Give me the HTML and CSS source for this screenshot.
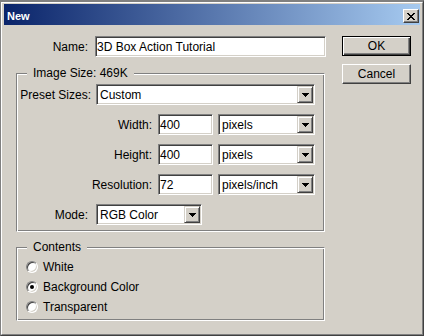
FILE: index.html
```html
<!DOCTYPE html>
<html lang="en">

<head>
    <meta charset="UTF-8">
    <title>New</title>
    <link rel="stylesheet" href="styles.css">
</head>

<body>
    <!-- 对话框外框 -->
    <div class="window">
        <div class="frame">
            <!-- 标题栏 -->
            <div class="titlebar">
                <span class="title">New</span>
                <span class="close">
                    <svg width="8" height="7" viewBox="0 0 8 7"><path d="M0 0h2v1h-2z M6 0h2v1h-2z M1 1h2v1h-2z M5 1h2v1h-2z M2 2h4v1h-4z M3 3h2v1h-2z M2 4h4v1h-4z M1 5h2v1h-2z M5 5h2v1h-2z M0 6h2v1h-2z M6 6h2v1h-2z" fill="#000"/></svg>
                </span>
            </div>

            <div class="client">
                <div class="main">
                    <div class="row">
                        <span class="lbl lbl-name">Name:</span>
                        <div class="field field-name">3D Box Action Tutorial</div>
                    </div>

                    <!-- 图像大小 -->
                    <fieldset class="group group-size">
                        <legend>Image Size: 469K</legend>
                        <div class="row">
                            <span class="lbl lbl-preset">Preset Sizes:</span>
                            <div class="combo combo-preset">
                                <span class="combo-text">Custom</span>
                                <span class="drop"><svg width="7" height="4" viewBox="0 0 7 4"><path d="M0 0h7v1h-1v1h-1v1h-1v1h-1v-1h-1v-1h-1v-1h-1z" fill="#000"/></svg></span>
                            </div>
                        </div>
                        <div class="row">
                            <span class="lbl lbl-dim">Width:</span>
                            <div class="field field-num">400</div>
                            <div class="combo combo-unit">
                                <span class="combo-text">pixels</span>
                                <span class="drop"><svg width="7" height="4" viewBox="0 0 7 4"><path d="M0 0h7v1h-1v1h-1v1h-1v1h-1v-1h-1v-1h-1v-1h-1z" fill="#000"/></svg></span>
                            </div>
                        </div>
                        <div class="row">
                            <span class="lbl lbl-dim">Height:</span>
                            <div class="field field-num">400</div>
                            <div class="combo combo-unit">
                                <span class="combo-text">pixels</span>
                                <span class="drop"><svg width="7" height="4" viewBox="0 0 7 4"><path d="M0 0h7v1h-1v1h-1v1h-1v1h-1v-1h-1v-1h-1v-1h-1z" fill="#000"/></svg></span>
                            </div>
                        </div>
                        <div class="row">
                            <span class="lbl lbl-dim">Resolution:</span>
                            <div class="field field-num">72</div>
                            <div class="combo combo-unit">
                                <span class="combo-text">pixels/inch</span>
                                <span class="drop"><svg width="7" height="4" viewBox="0 0 7 4"><path d="M0 0h7v1h-1v1h-1v1h-1v1h-1v-1h-1v-1h-1v-1h-1z" fill="#000"/></svg></span>
                            </div>
                        </div>
                        <div class="row">
                            <span class="lbl lbl-mode">Mode:</span>
                            <div class="combo combo-mode">
                                <span class="combo-text">RGB Color</span>
                                <span class="drop"><svg width="7" height="4" viewBox="0 0 7 4"><path d="M0 0h7v1h-1v1h-1v1h-1v1h-1v-1h-1v-1h-1v-1h-1z" fill="#000"/></svg></span>
                            </div>
                        </div>
                    </fieldset>

                    <!-- 内容 -->
                    <fieldset class="group group-contents">
                        <legend>Contents</legend>
                        <div class="radio-row"><span class="radio"></span>White</div>
                        <div class="radio-row"><span class="radio on"></span>Background Color</div>
                        <div class="radio-row"><span class="radio"></span>Transparent</div>
                    </fieldset>
                </div>

                <!-- 按钮 -->
                <div class="side">
                    <div class="btn btn-default">OK</div>
                    <div class="btn">Cancel</div>
                </div>
            </div>
        </div>
    </div>
</body>

</html>
```

FILE: styles.css
```css
* {
    margin: 0;
    padding: 0;
}

body {
    background: #d4d0c8;
    font-family: "Liberation Sans", Arial, sans-serif;
    font-size: 12px;
    color: #000;
}

.window {
    width: 424px;
    height: 336px;
    box-sizing: border-box;
    border: 1px solid;
    border-top-width: 2px;
    border-color: #808080 #404040 #404040 #808080;
}

.frame {
    height: 100%;
    box-sizing: border-box;
    border: 1px solid;
    border-color: #fff #808080 #808080 #fff;
    padding: 1px 2px 2px 2px;
    background: #d4d0c8;
}

/* 标题栏 */
.titlebar {
    height: 21px;
    box-sizing: border-box;
    padding-top: 3px;
    display: flex;
    align-items: center;
    justify-content: space-between;
    background: linear-gradient(90deg, #0a246a, #a6caf0);
}

.title {
    padding-left: 3px;
    color: #fff;
    font-weight: bold;
    font-size: 11px;
}

.close {
    width: 16px;
    height: 14px;
    box-sizing: border-box;
    margin-right: 1px;
    display: flex;
    align-items: center;
    justify-content: center;
    background: #d4d0c8;
    border: 1px solid;
    border-color: #fff #404040 #404040 #fff;
    box-shadow: inset -1px -1px #808080;
}

.client {
    display: flex;
    padding: 11px 0 0 12px;
}

.main {
    width: 310px;
}

.row {
    display: flex;
    align-items: center;
    height: 21px;
}

.lbl {
    text-align: right;
}

.lbl-name {
    width: 72px;
    margin-right: 7px;
}

.lbl-preset {
    width: 74px;
    margin-right: 5px;
}

.lbl-dim {
    width: 135px;
    margin-right: 6px;
}

.lbl-mode {
    width: 71px;
    margin-right: 8px;
}

/* 凹陷的输入框 */
.field,
.combo {
    height: 21px;
    box-sizing: border-box;
    border: 1px solid;
    border-color: #808080 #fff #fff #808080;
    box-shadow: inset 1px 1px #404040, inset -1px -1px #d4d0c8;
    background: #fff;
    padding: 1px;
    display: flex;
    align-items: center;
}

.field {
    padding-left: 1px;
}

.field-name {
    width: 231px;
}

.field-num {
    width: 55px;
}

.combo-text {
    flex: 1;
    padding-left: 2px;
}

.combo-preset {
    width: 219px;
}

.combo-unit {
    width: 97px;
    margin-left: 5px;
}

.combo-mode {
    width: 106px;
}

.drop {
    width: 16px;
    height: 17px;
    box-sizing: border-box;
    display: flex;
    align-items: center;
    justify-content: center;
    background: #d4d0c8;
    border: 1px solid;
    border-color: #d4d0c8 #404040 #404040 #d4d0c8;
    box-shadow: inset 1px 1px #fff, inset -1px -1px #808080;
}

/* 分组框 */
.group {
    width: 309px;
    box-sizing: border-box;
    min-width: 0;
    border: 1px solid;
    border-color: #808080 #fff #fff #808080;
    box-shadow: inset 1px 1px #fff, inset -1px -1px #808080;
}

.group legend {
    margin-left: 10px;
    padding: 0 6px;
    line-height: 15px;
    background: #d4d0c8;
}

.group-size {
    margin-top: 9px;
    padding: 3px 0 6px 0;
    display: flex;
    flex-direction: column;
    gap: 9px;
}

.group-contents {
    margin-top: 8px;
    padding: 2px 0 3px 0;
}

.radio-row {
    height: 20px;
    display: flex;
    align-items: center;
}

.radio {
    width: 12px;
    height: 12px;
    box-sizing: border-box;
    margin: 0 5px 0 9px;
    border-radius: 50%;
    border: 1px solid;
    border-color: #808080 #fff #fff #808080;
    box-shadow: inset 1px 1px #404040, inset -1px -1px #d4d0c8;
    background: #fff;
    display: flex;
    align-items: center;
    justify-content: center;
}

.radio.on::after {
    content: "";
    width: 4px;
    height: 4px;
    border-radius: 50%;
    background: #000;
}

/* 右侧按钮 */
.side {
    margin-left: 16px;
    display: flex;
    flex-direction: column;
    gap: 8px;
}

.btn {
    width: 69px;
    height: 20px;
    box-sizing: border-box;
    display: flex;
    align-items: center;
    justify-content: center;
    background: #d4d0c8;
    border: 1px solid;
    border-color: #fff #404040 #404040 #fff;
    box-shadow: inset -1px -1px #808080;
}

.btn-default {
    border-color: #000;
    box-shadow: inset 1px 1px #fff, inset -1px -1px #404040, inset -2px -2px #808080;
}
```
